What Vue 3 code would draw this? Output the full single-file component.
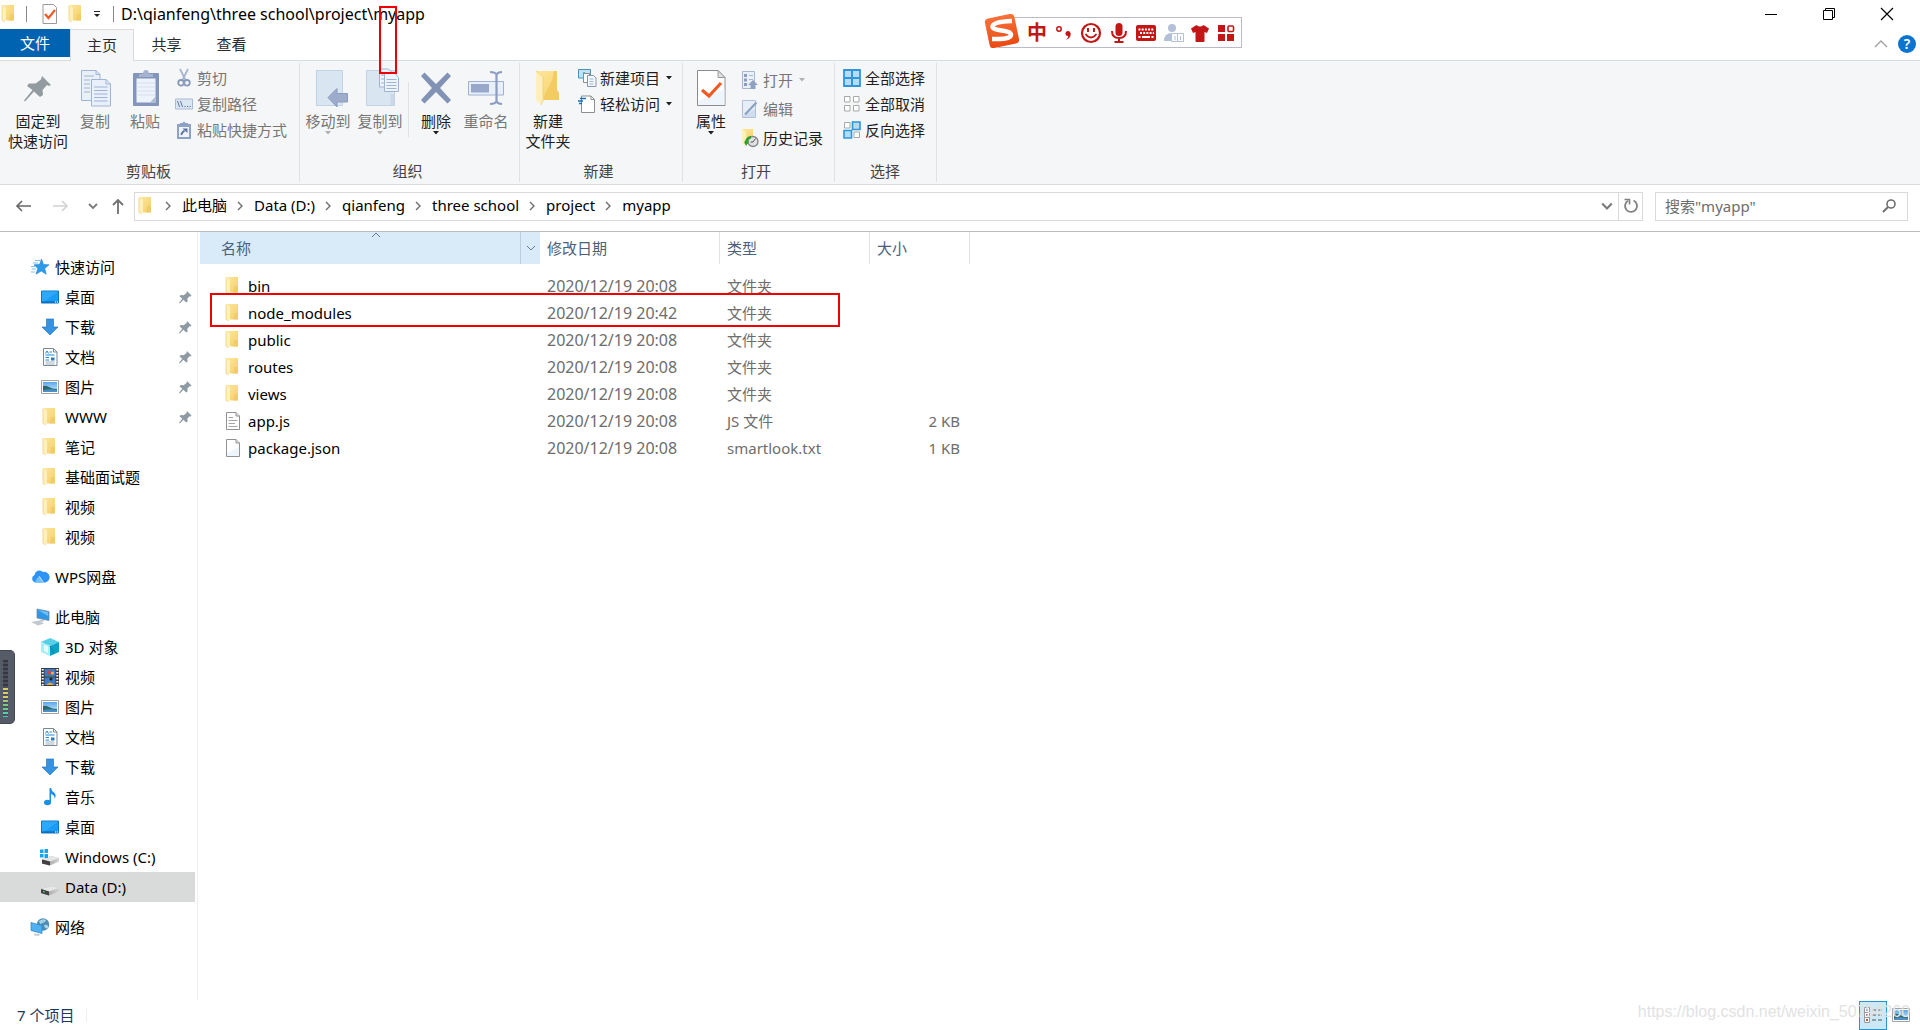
<script setup>
const clipboardSmall = [
  { icon: 'cut', label: '剪切' },
  { icon: 'path', label: '复制路径' },
  { icon: 'shortcut', label: '粘贴快捷方式' },
]
const selectSmall = [
  { icon: 'sel-all', label: '全部选择' },
  { icon: 'sel-none', label: '全部取消' },
  { icon: 'sel-invert', label: '反向选择' },
]
const crumbs = ['此电脑', 'Data (D:)', 'qianfeng', 'three school', 'project', 'myapp']
const tree = [
  {
    root: { icon: 'star', label: '快速访问' },
    items: [
      { icon: 'desktop', label: '桌面', pinned: true },
      { icon: 'download', label: '下载', pinned: true },
      { icon: 'document', label: '文档', pinned: true },
      { icon: 'picture', label: '图片', pinned: true },
      { icon: 'folder', label: 'WWW', pinned: true },
      { icon: 'folder', label: '笔记' },
      { icon: 'folder', label: '基础面试题' },
      { icon: 'folder', label: '视频' },
      { icon: 'folder', label: '视频' },
    ],
  },
  { root: { icon: 'cloud', label: 'WPS网盘' }, items: [] },
  {
    root: { icon: 'computer', label: '此电脑' },
    items: [
      { icon: 'cube', label: '3D 对象' },
      { icon: 'film', label: '视频' },
      { icon: 'picture', label: '图片' },
      { icon: 'document', label: '文档' },
      { icon: 'download', label: '下载' },
      { icon: 'music', label: '音乐' },
      { icon: 'desktop', label: '桌面' },
      { icon: 'drive-c', label: 'Windows (C:)' },
      { icon: 'drive', label: 'Data (D:)', selected: true },
    ],
  },
  { root: { icon: 'network', label: '网络' }, items: [] },
]
const files = [
  { icon: 'folder', name: 'bin', date: '2020/12/19 20:08', type: '文件夹', size: '' },
  { icon: 'folder', name: 'node_modules', date: '2020/12/19 20:42', type: '文件夹', size: '' },
  { icon: 'folder', name: 'public', date: '2020/12/19 20:08', type: '文件夹', size: '' },
  { icon: 'folder', name: 'routes', date: '2020/12/19 20:08', type: '文件夹', size: '' },
  { icon: 'folder', name: 'views', date: '2020/12/19 20:08', type: '文件夹', size: '' },
  { icon: 'file-text', name: 'app.js', date: '2020/12/19 20:08', type: 'JS 文件', size: '2 KB' },
  { icon: 'file', name: 'package.json', date: '2020/12/19 20:08', type: 'smartlook.txt', size: '1 KB' },
]
</script>

<template>
  <div class="explorer">
    <svg class="sprite" aria-hidden="true">
      <defs>
        <linearGradient id="g-fold" x1="0" y1="0" x2="1" y2="1">
          <stop offset="0" stop-color="#ffe79b" /><stop offset="1" stop-color="#f3cf68" />
        </linearGradient>
        <linearGradient id="g-sogou" x1="0" y1="0" x2="0" y2="1">
          <stop offset="0" stop-color="#f9703a" /><stop offset="1" stop-color="#ea4a12" />
        </linearGradient>
        <linearGradient id="g-sky" x1="0" y1="0" x2="0" y2="1">
          <stop offset="0" stop-color="#5aa5ea" /><stop offset="1" stop-color="#d6eefb" />
        </linearGradient>
        <linearGradient id="g-drive" x1="0" y1="0" x2="1" y2="0">
          <stop offset="0" stop-color="#8d8d8d" /><stop offset="1" stop-color="#d4d4d4" />
        </linearGradient>
      </defs>
      <symbol id="folder" viewBox="0 0 18 18">
        <path d="M2 0h12v15.500H6z" fill="url(#g-fold)" />
        <path d="M10.500 9h3.500v6.500h-5z" fill="#efc75e" opacity=".6" />
        <path d="M2 0l4 2.500v12.500L4.500 17 2 15z" fill="#fff0bd" />
        <path d="M2 .5v14.800l2.500 1.500" fill="none" stroke="#edca6c" stroke-width=".7" />
      </symbol>
      <symbol id="folder-big" viewBox="0 0 36 36">
        <path d="M6 1h21v19l2 3v7H12z" fill="url(#g-fold)" />
        <path d="M14 30c1-11 8-13 10-29h3v19l2 3v7z" fill="#f2cc63" />
        <path d="M6 1l7 6v24l-2 4-5-5z" fill="#ffefbd" />
        <path d="M6 1l7 6v24l-2 4" fill="none" stroke="#eccb70" stroke-width=".7" />
      </symbol>
      <symbol id="page-check" viewBox="0 0 18 20">
        <path d="M2 .5h10.500l3 3v16H2z" fill="#fff" stroke="#9a9a9a" />
        <path d="M4 10l3.500 4 6.500-8" fill="none" stroke="#f05a28" stroke-width="2.200" />
      </symbol>
      <symbol id="page-check-big" viewBox="0 0 36 36">
        <path d="M4.500.5H25l7 7v28h-27.500z" fill="#fff" stroke="#8c8c8c" />
        <path d="M5 31l26.500-12v16H5z" fill="#eff5fc" />
        <path d="M25 .5V7.500h7z" fill="#dfe1e3" stroke="#9b9b9b" />
        <path d="M9 20l7 6 12-13" fill="none" stroke="#f15a22" stroke-width="3.200" />
      </symbol>
      <symbol id="pin-big" viewBox="0 0 36 36">
        <path d="M22 6l9 9-2 1-2-1-4.500 5 .5 5-3 2-6-5.500L5 31.500l-1-1L12.500 20 7 16l2-2.500 6.500 0L21 9.500z" fill="#929b9f" />
      </symbol>
      <symbol id="pin" viewBox="0 0 14 14">
        <path d="M9 1l4.500 4.500-1 1-1-.3-2.200 2.600.4 2.400-1.500 1.300-2.800-2.700L1.800 13.500l-.8-.8 3.300-4L1.500 6.200l1.200-1.200 3 .2L8.500 3z" fill="#8d9aa3" />
      </symbol>
      <symbol id="copy-big" viewBox="0 0 36 36">
        <g stroke="#9fb3d3" fill="#e9f0fa">
          <path d="M4.500.5H19l4 4v26H4.500z" />
          <path d="M14.500 9.500H29l4.500 4.500v22H14.500z" />
          <path d="M29 9.500V14h4.500M19 .5v4h4" fill="none" />
          <path d="M7 6h10M7 10h6M7 14h6M7 18h6M7 22h6M17 17h13.500M17 20.500h13.500M17 24h13.500M17 27.500h13.500M17 31h13.500" />
        </g>
      </symbol>
      <symbol id="paste-big" viewBox="0 0 36 36">
        <rect x="6" y="3" width="26" height="33" rx="1" fill="#8495bb" />
        <path d="M9.500 8.500h19v24h-19z" fill="#edf3fb" />
        <path d="M9.500 13h19M9.500 17h19M9.500 21h19M9.500 25h19" stroke="#d5dfee" />
        <path d="M23 32.500l5.500-6v6z" fill="#aebcd6" />
        <path d="M12 7V4h4q0-4 3-4t3 4h4v3z" fill="#a5b3cf" />
      </symbol>
      <symbol id="move-big" viewBox="0 0 36 36">
        <path d="M6.500.5h26v35h-26z" fill="#dae5f2" stroke="#bfd2e6" />
        <path d="M18 27.500l9-9v5h10.500v8.500H27v5z" fill="#9dacca" stroke="#8b9cbd" />
      </symbol>
      <symbol id="copyto-big" viewBox="0 0 36 36">
        <path d="M4.500.5h28v35h-28z" fill="#dae5f2" stroke="#bfd2e6" />
        <g fill="#eef4fb" stroke="#9fb3d3">
          <path d="M17.500-1h9l3 3v15h-12z" /><path d="M22.500 3.500H33l3.500 4v14h-14z" />
          <path d="M24.500 9.500h10M24.500 12.500h10M24.500 15.500h10M24.500 18.500h10M19 5h3M19 9h3M19 13h3" />
        </g>
        <path d="M28.500 24h4v11.500h-4z" fill="#c9d7e7" />
      </symbol>
      <symbol id="delete-big" viewBox="0 0 36 36">
        <path d="M3 6l3.500-3.500L18 14 29.500 2.500 33 6 22 18l11 12-3.500 3.500L18 22 6.500 33.500 3 30 14 18z" fill="#8292b5" />
      </symbol>
      <symbol id="rename-big" viewBox="0 0 36 36">
        <path d="M.5 11.500h35v13.500H.5z" fill="#e7effa" stroke="#9fb0d0" />
        <path d="M3 14h18v8.500H3z" fill="#97a8ca" />
        <path d="M22 2q5 0 6.500 2.500Q30 2 34 2M28.500 4v28M22 34q5 0 6.500-2.500Q30 34 34 34" fill="none" stroke="#8b9cc0" stroke-width="2.200" />
      </symbol>
      <symbol id="cut" viewBox="0 0 18 18">
        <path d="M5 0l5.500 11M13 0L7.500 11" stroke="#a9b6cf" stroke-width="1.800" />
        <circle cx="6" cy="13.800" r="2.800" fill="none" stroke="#8999bb" stroke-width="1.800" />
        <circle cx="12" cy="13.800" r="2.800" fill="none" stroke="#8999bb" stroke-width="1.800" />
      </symbol>
      <symbol id="path" viewBox="0 0 18 18">
        <path d="M.5 4h17v10H.5z" fill="#dbe6f3" stroke="#a9bad6" />
        <path d="M2.500 6l2 6M5.500 6l2 6M9.500 11.500h1.200M12 11.500h1.200M14.500 11.500h1.200" stroke="#5f7399" />
      </symbol>
      <symbol id="shortcut" viewBox="0 0 18 18">
        <path d="M2 3h14v15H2z" fill="#8fa1c4" /><path d="M4 6h10v10H4z" fill="#eef4fb" />
        <path d="M5 4V2h2.500Q9-1 10.500 2H13v2z" fill="#8fa1c4" />
        <path d="M6.500 14q-.3-2 3-4.500" stroke="#5e7399" stroke-width="1.800" fill="none" /><path d="M7.500 7.500H12.500V12z" fill="#5e7399" />
      </symbol>
      <symbol id="new-item" viewBox="0 0 18 18">
        <path d="M.5.5h12V9h-12z" fill="#bfe3f6" stroke="#4b8fb3" /><path d="M5 3.500h2v3H5z" fill="#3b7f66" />
        <path d="M5.500 4.500h6v9h-6z" fill="#fff" stroke="#8b8b8b" /><path d="M9.500 6.500h6l2.500 2.500v8.500H9.500z" fill="#f4f8ff" stroke="#8a95aa" />
        <path d="M11.500 10h4M11.500 12.500h4M11.500 15h4" stroke="#a4b3cb" />
      </symbol>
      <symbol id="easy-access" viewBox="0 0 18 18">
        <path d="M3.500 1h9.500l3.500 3.500V17.500H3.500z" fill="#fff" stroke="#8b8f94" /><path d="M13 1v3.500h3.500" fill="none" stroke="#8b8f94" />
        <path d="M2 3.500h6M0 6h5M1 8.500h3" stroke="#1b6fb5" stroke-width="1.400" />
      </symbol>
      <symbol id="open" viewBox="0 0 18 18">
        <path d="M1.500.5h12v17h-12z" fill="#e9f0f9" stroke="#a6b5d0" />
        <path d="M3 3h3v3H3zM3 7.500h3v3H3zM3 12h3v3H3z" fill="#8a9bbd" /><path d="M8 4.500h4M8 8.500h4" stroke="#a6b5d0" />
        <path d="M12 9l5 5h-2.500v4h-5v-4H7z" fill="#90a0c0" />
      </symbol>
      <symbol id="edit" viewBox="0 0 18 18">
        <path d="M1.500.5h13v17h-13z" fill="#e6eef8" stroke="#b1c0d8" /><path d="M2 16L14 9v8H2z" fill="#cfdeef" />
        <path d="M4 14.500L15.500 2.500" stroke="#8ca0c3" stroke-width="2.200" />
      </symbol>
      <symbol id="history" viewBox="0 0 18 18">
        <path d="M1 0h11v15H5z" fill="url(#g-fold)" /><path d="M1 0l4 3v14l-4-3z" fill="#ffefb9" />
        <circle cx="12" cy="12.500" r="5" fill="#e2e2e2" stroke="#858585" stroke-width="1.300" /><path d="M12 13l2.500-3.500M12 13H9.500" stroke="#555" />
        <path d="M5 15q0-6 5-7" stroke="#26a12e" stroke-width="2.400" fill="none" /><path d="M3 12.500h5L5 17z" fill="#26a12e" />
      </symbol>
      <symbol id="sel-all" viewBox="0 0 18 18">
        <path d="M1 1h16v16H1z" fill="#b5dcf6" stroke="#3095dd" stroke-width="1.800" /><path d="M9 1v16M1 9h16" stroke="#3095dd" stroke-width="2" />
      </symbol>
      <symbol id="sel-none" viewBox="0 0 18 18">
        <path d="M1.500 1.500H7V7H1.500zM10.500 1.500H16V7h-5.500zM1.500 10.500H7V16H1.500zM10.500 10.500H16V16h-5.500z" fill="#fff" stroke="#a7a7a7" />
      </symbol>
      <symbol id="sel-invert" viewBox="0 0 18 18">
        <path d="M1.500 1.500H7V7H1.500zM11 11H16.500V16.500H11z" fill="#fff" stroke="#a7a7a7" />
        <path d="M9.500 1H17v7.500H9.500zM1 9.500h7.500V17H1z" fill="#b5dcf6" stroke="#3095dd" stroke-width="1.600" />
      </symbol>
      <symbol id="star" viewBox="0 0 18 18">
        <path d="M10.500 1l2 5.500 5.500.3-4.300 3.600 1.500 5.800-4.900-3.200-5.300 3.200 1.900-5.800L3 6.800l5.500-.3z" fill="#2b9bea" stroke="#1d7fce" stroke-width=".6" />
        <path d="M4 2.500h5M2 5h5M0 8.500h4M1 11h4M0 14h4" stroke="#7fc1ee" />
      </symbol>
      <symbol id="desktop" viewBox="0 0 18 18">
        <path d="M.5 3h17v12H.5z" fill="#1a9bf4" stroke="#1075c1" /><path d="M1 3.500h16L3 14H1z" fill="#2ea8fb" />
        <path d="M1 14h13" stroke="#0b5c9c" /><path d="M14 14h1M16 14h1" stroke="#fff" />
      </symbol>
      <symbol id="download" viewBox="0 0 18 18">
        <path d="M5.500 1h7v8h4.500L9 17 1 9h4.500z" fill="#3493e3" stroke="#2a76bb" stroke-width=".7" />
      </symbol>
      <symbol id="document" viewBox="0 0 18 18">
        <path d="M2.500.5h10l3.500 3.500v13.500H2.500z" fill="#fff" stroke="#7c8790" /><path d="M12.500.5V4H16" fill="none" stroke="#7c8790" />
        <path d="M4.500 5.500L6 3l1.500 2.500M8.500 4H11M4.500 7h9M4.500 9.500H8M4.500 12H8" stroke="#1d87d8" fill="none" />
        <path d="M10 9.500h3.500v3H10z" fill="#2f77b8" /><path d="M4.500 14h9M4.500 16h9" stroke="#9fb1bf" />
      </symbol>
      <symbol id="picture" viewBox="0 0 18 18">
        <path d="M.5 2.500h17v13H.5z" fill="#fff" stroke="#9ea3a7" /><path d="M2 4h14v10H2z" fill="url(#g-sky)" />
        <path d="M2 8q3-1 6 1t8 2v2H2z" fill="#2b6b6b" /><path d="M2 12.500q6-2 14-.5v2H2z" fill="#4d8ec4" />
      </symbol>
      <symbol id="cloud" viewBox="0 0 18 18">
        <path d="M4 14.500a4 4 0 0 1-.5-7.500A5 5 0 0 1 12 4a5 5 0 0 1 2.500 10.500z" fill="#2f93f5" />
        <path d="M4 14.500q2-6 5-6l3.500 6z" fill="#71c0fb" /><path d="M8 8l4.500 6.500" stroke="#cfeaff" stroke-width=".8" />
      </symbol>
      <symbol id="computer" viewBox="0 0 18 18">
        <path d="M6 1l12 2.500v9L6 10z" fill="#2f97e6" stroke="#6c8ba3" stroke-width=".8" /><path d="M7 2l10 2v4z" fill="#6cc0f7" />
        <path d="M10 11.500l4 1-3 1.500-3-1.500zM0 14l8-1.500 5 3L7 17.500z" fill="#c2cad1" />
      </symbol>
      <symbol id="cube" viewBox="0 0 18 18">
        <path d="M9 0l9 4-9 4-9-4z" fill="#57cfe6" /><path d="M0 4l9 4v10l-9-4z" fill="#a9edf5" /><path d="M18 4L9 8v10l9-4z" fill="#0ea0c8" />
        <path d="M3 7l4 1v7l-4-2z" fill="#e6fbfd" /><path d="M9 8l4 8" stroke="#0b86b0" />
      </symbol>
      <symbol id="film" viewBox="0 0 18 18">
        <path d="M0 0h18v18H0z" fill="#3a3a3a" /><path d="M3.500 1h11v7.500h-11zM3.500 9.500h11V17h-11z" fill="#3f79cc" />
        <path d="M1.700 1v17M16.300 1v17" stroke="#fff" stroke-width="2" stroke-dasharray="1.600 1.400" />
        <circle cx="8" cy="4.500" r="2" fill="#d8413b" /><circle cx="11.500" cy="5" r="1.600" fill="#e5b53a" /><path d="M5 7.500h8v1H5z" fill="#3d8f3a" />
        <circle cx="10" cy="11" r="1.500" fill="#222" /><path d="M5 17q4-5 8 0z" fill="#d9a93a" />
      </symbol>
      <symbol id="music" viewBox="0 0 18 18">
        <ellipse cx="6.500" cy="14.500" rx="3.500" ry="2.800" fill="#1790e8" /><path d="M8.500 0h1.500q.5 3 3 4.500 3 2.500.5 6.500.5-4-3.500-5v8.500H8.500z" fill="#1790e8" />
      </symbol>
      <symbol id="drive" viewBox="0 0 18 18">
        <path d="M0 11L10 8l8 2v3.500L8 17.500l-8-2.500z" fill="url(#g-drive)" /><path d="M0 11l8 2.500L18 10l-8-2z" fill="#e6e6e6" />
        <path d="M0 11l8 2.500v4L0 15z" fill="#414141" /><path d="M2 13.500l2 .6" stroke="#5ed26a" />
      </symbol>
      <symbol id="drive-c" viewBox="0 0 18 18">
        <path d="M1 11.500L10 8l8 2v3.500L9 17.500l-8-2z" fill="url(#g-drive)" /><path d="M1 11.500l8 2L18 10l-8-2z" fill="#e6e6e6" />
        <path d="M1 11.500l8 2v4l-8-2z" fill="#414141" />
        <path d="M-1 1.500h3.500V5H-1zM3.500 1H7v4H3.500zM-1 6h3.500v3.500H-1zM3.500 6H7v4H3.500z" fill="#14a4f4" />
      </symbol>
      <symbol id="network" viewBox="0 0 18 18">
        <circle cx="12" cy="6.500" r="6.200" fill="#4d8db5" /><path d="M8 3q4-3 7-1-1 3-4 3-2 3-3-2zM13 7q5-1 4 3-3 2-4-3z" fill="#a4d3e8" />
        <path d="M0 4.500l11 3v8L0 12.500z" fill="#4fb0f2" stroke="#2d82c4" stroke-width=".7" /><path d="M3 15.500l6 .5-1 2-5-.5z" fill="#c7d0d6" />
      </symbol>
      <symbol id="file" viewBox="0 0 18 18">
        <path d="M2.500.5H12l3.500 3.500v13.500h-13z" fill="#fff" stroke="#919191" /><path d="M3 14l12-6v9H3z" fill="#edf5fc" /><path d="M12 .5V4h3.500" fill="#e4e4e4" stroke="#919191" />
      </symbol>
      <symbol id="file-text" viewBox="0 0 18 18">
        <path d="M2.500.5H12l3.500 3.500v13.500h-13z" fill="#fff" stroke="#919191" /><path d="M12 .5V4h3.500" fill="#e4e4e4" stroke="#919191" />
        <path d="M4.500 5.500H9M4.500 8.500h9M4.500 11.500H11M4.500 14.500h9" stroke="#a5a5a5" />
      </symbol>
      <symbol id="chevron" viewBox="0 0 8 10"><path d="M2 1l4 4-4 4" fill="none" stroke="#6d6d6d" stroke-width="1.400" /></symbol>
      <symbol id="down" viewBox="0 0 10 8"><path d="M1 2l4 4 4-4" fill="none" stroke="#7a7a7a" stroke-width="1.800" /></symbol>
      <symbol id="caret" viewBox="0 0 6 4"><path d="M0 0h6L3 3.500z" fill="currentColor" /></symbol>
    </svg>

    <header class="titlebar">
      <svg class="ic18"><use href="#folder" /></svg>
      <span class="bar first"></span>
      <button class="plain" aria-label="属性"><svg class="ic20"><use href="#page-check" /></svg></button>
      <button class="plain new" aria-label="新建文件夹"><svg class="ic18"><use href="#folder" /></svg></button>
      <button class="plain custom" aria-label="自定义快速访问工具栏">
        <svg width="8" height="8" viewBox="0 0 8 8"><path d="M1 1.500h6" stroke="#222" /><path d="M1 4h6L4 7z" fill="#222" /></svg>
      </button>
      <span class="bar"></span>
      <h1 class="title">D:\qianfeng\three school\project\myapp</h1>
      <div class="controls">
        <button class="plain" aria-label="最小化"><svg width="12" height="12"><path d="M0 6.500h12" stroke="#000" /></svg></button>
        <button class="plain" aria-label="还原"><svg width="12" height="12"><path d="M.5 2.500h9v9h-9zM2.500 2.500v-2h9v9h-2" fill="none" stroke="#000" /></svg></button>
        <button class="plain" aria-label="关闭"><svg width="12" height="12"><path d="M0 0l12 12M12 0L0 12" stroke="#000" stroke-width="1.200" /></svg></button>
      </div>
    </header>

    <nav class="tabs">
      <button class="tab file">文件</button>
      <button class="tab active">主页</button>
      <button class="tab">共享</button>
      <button class="tab">查看</button>
      <div class="tab-tools">
        <button class="plain" aria-label="最小化功能区"><svg width="14" height="8"><path d="M1 7l6-6 6 6" fill="none" stroke="#a0a0a0" stroke-width="1.400" /></svg></button>
        <button class="help" aria-label="帮助">?</button>
      </div>
    </nav>

    <section class="ribbon">
      <div class="group g-clip">
        <div class="tools">
          <button class="big w68"><svg class="ic36"><use href="#pin-big" /></svg><span>固定到<br />快速访问</span></button>
          <button class="big w46 off"><svg class="ic36"><use href="#copy-big" /></svg><span>复制</span></button>
          <button class="big w54 off"><svg class="ic36"><use href="#paste-big" /></svg><span>粘贴</span></button>
          <div class="small-col">
            <button v-for="s in clipboardSmall" :key="s.label" class="small off"><svg class="ic18"><use :href="'#' + s.icon" /></svg>{{ s.label }}</button>
          </div>
        </div>
        <div class="group-name">剪贴板</div>
      </div>
      <div class="group g-org">
        <div class="tools">
          <button class="big w52 off"><svg class="ic36"><use href="#move-big" /></svg><span>移动到</span><svg class="caret"><use href="#caret" /></svg></button>
          <button class="big w52 off"><svg class="ic36"><use href="#copyto-big" /></svg><span>复制到</span><svg class="caret"><use href="#caret" /></svg></button>
          <span class="divider"></span>
          <button class="big w54"><svg class="ic36"><use href="#delete-big" /></svg><span>删除</span><svg class="caret"><use href="#caret" /></svg></button>
          <button class="big w46 off"><svg class="ic36"><use href="#rename-big" /></svg><span>重命名</span></button>
        </div>
        <div class="group-name">组织</div>
      </div>
      <div class="group g-new">
        <div class="tools">
          <button class="big w54"><svg class="ic36"><use href="#folder-big" /></svg><span>新建<br />文件夹</span></button>
          <div class="small-col">
            <button class="small"><svg class="ic18"><use href="#new-item" /></svg>新建项目<svg class="caret"><use href="#caret" /></svg></button>
            <button class="small"><svg class="ic18"><use href="#easy-access" /></svg>轻松访问<svg class="caret"><use href="#caret" /></svg></button>
          </div>
        </div>
        <div class="group-name">新建</div>
      </div>
      <div class="group g-open">
        <div class="tools">
          <button class="big w54"><svg class="ic36"><use href="#page-check-big" /></svg><span>属性</span><svg class="caret"><use href="#caret" /></svg></button>
          <div class="small-col roomy">
            <button class="small off"><svg class="ic18"><use href="#open" /></svg>打开<svg class="caret"><use href="#caret" /></svg></button>
            <button class="small off"><svg class="ic18"><use href="#edit" /></svg>编辑</button>
            <button class="small"><svg class="ic18"><use href="#history" /></svg>历史记录</button>
          </div>
        </div>
        <div class="group-name">打开</div>
      </div>
      <div class="group g-sel">
        <div class="tools">
          <div class="small-col">
            <button v-for="s in selectSmall" :key="s.label" class="small"><svg class="ic18"><use :href="'#' + s.icon" /></svg>{{ s.label }}</button>
          </div>
        </div>
        <div class="group-name">选择</div>
      </div>
    </section>

    <div class="address-row">
      <div class="nav-buttons">
        <button class="plain" aria-label="后退"><svg width="16" height="12"><path d="M7 1L2 6l5 5M2 6h14" fill="none" stroke="#666" stroke-width="1.600" /></svg></button>
        <button class="plain" aria-label="前进"><svg width="16" height="12"><path d="M9 1l5 5-5 5M14 6H0" fill="none" stroke="#d2d2d2" stroke-width="1.600" /></svg></button>
        <button class="plain recent" aria-label="最近浏览的位置"><svg width="10" height="8"><use href="#down" /></svg></button>
        <button class="plain" aria-label="上移"><svg width="12" height="16"><path d="M1 7l5-5 5 5M6 2v14" fill="none" stroke="#707070" stroke-width="1.800" /></svg></button>
      </div>
      <div class="address">
        <svg class="ic18"><use href="#folder" /></svg>
        <template v-for="c in crumbs" :key="c">
          <svg class="chev"><use href="#chevron" /></svg>
          <button class="plain crumb">{{ c }}</button>
        </template>
        <button class="plain drop" aria-label="以前的位置"><svg width="12" height="10"><use href="#down" /></svg></button>
        <button class="plain refresh" aria-label="刷新">
          <svg width="16" height="16"><path d="M10.500 2.500a6 6 0 1 1-5.500.3" fill="none" stroke="#808080" stroke-width="1.800" /><path d="M1.500 1.500h5v5" fill="none" stroke="#808080" stroke-width="1.600" /></svg>
        </button>
      </div>
      <div class="search">
        <input type="text" placeholder='搜索"myapp"' aria-label="搜索 myapp" />
        <svg width="14" height="14"><circle cx="9" cy="5" r="4" fill="none" stroke="#707070" stroke-width="1.600" /><path d="M6 8l-5 5" stroke="#707070" stroke-width="2" /></svg>
      </div>
    </div>

    <main class="content">
      <aside class="sidebar">
        <div v-for="g in tree" :key="g.root.label" class="branch">
          <a href="#" class="node root"><svg class="ic18"><use :href="'#' + g.root.icon" /></svg>{{ g.root.label }}</a>
          <a v-for="(n, i) in g.items" :key="i" href="#" class="node" :class="{ selected: n.selected }">
            <svg class="ic18"><use :href="'#' + n.icon" /></svg>{{ n.label }}
            <svg v-if="n.pinned" class="pin"><use href="#pin" /></svg>
          </a>
        </div>
      </aside>
      <div class="list">
        <table>
          <thead>
            <tr>
              <th class="c-name" scope="col">
                <div class="name-head">
                  名称
                  <svg class="sort" width="10" height="6"><path d="M1 5l4-4 4 4" fill="none" stroke="#6a7b8c" /></svg>
                  <button class="plain filter" aria-label="筛选名称"><svg width="10" height="6"><path d="M1 1l4 4 4-4" fill="none" stroke="#6a7b8c" /></svg></button>
                </div>
              </th>
              <th class="c-date" scope="col">修改日期</th>
              <th class="c-type" scope="col">类型</th>
              <th class="c-size" scope="col">大小</th>
            </tr>
          </thead>
          <tbody>
            <tr v-for="f in files" :key="f.name">
              <td class="name"><div><svg class="ic18"><use :href="'#' + f.icon" /></svg>{{ f.name }}</div></td>
              <td class="date">{{ f.date }}</td>
              <td>{{ f.type }}</td>
              <td class="size">{{ f.size }}</td>
            </tr>
          </tbody>
        </table>
        <div class="mark row-mark"></div>
      </div>
    </main>

    <footer class="status">
      <span class="count">7 个项目</span>
      <div class="views">
        <button class="view on" aria-label="详细信息">
          <svg width="18" height="18"><path d="M.5 1.500h5v5h-5zM.5 6.500h5v5h-5zM.5 11.500h5v5h-5z" fill="#fff" stroke="#999" /><path d="M2 4h2" stroke="#444" stroke-width="2" /><path d="M2 9h2M2 14h2" stroke="#b65a35" stroke-width="2" /><path d="M8 4h4M14 4h4M8 9h4M14 9h4M8 14h4M14 14h4" stroke="#555" /></svg>
        </button>
        <button class="view" aria-label="大缩略图"><svg class="ic18"><use href="#picture" /></svg></button>
      </div>
    </footer>

    <div class="watermark">https://blog.csdn.net/weixin_50794260</div>
    <div class="mark title-mark"></div>

    <div class="ime">
      <svg class="sogou" viewBox="0 0 36 36">
        <rect x="3" y="3" width="30" height="30" rx="4" fill="url(#g-sogou)" transform="rotate(-12 18 18)" />
        <path d="M28 8Q9 8.500 8.500 13.500c0 5 18 3 18.500 8 0 5-12 4.500-19 4.500" fill="none" stroke="#fff" stroke-width="4.600" />
      </svg>
      <button class="plain ime-lang">中</button>
      <button class="plain" aria-label="标点"><svg width="18" height="18"><circle cx="4" cy="5" r="2.200" fill="none" stroke="#c31616" stroke-width="1.500" /><circle cx="13" cy="9.500" r="2.500" fill="#c31616" /><path d="M15.500 9.500q.5 4.500-4.500 6.500 3-3 2-5z" fill="#c31616" /></svg></button>
      <button class="plain" aria-label="表情"><svg width="22" height="22"><circle cx="11" cy="11" r="9" fill="none" stroke="#c31616" stroke-width="2.200" /><path d="M8 6v4M14 6v4" stroke="#c31616" stroke-width="2" /><path d="M5.500 12q5.500 7 11 0" fill="none" stroke="#c31616" stroke-width="1.800" /></svg></button>
      <button class="plain" aria-label="语音"><svg width="18" height="22"><rect x="5.500" y="1" width="7" height="13" rx="3.500" fill="#c31616" /><path d="M2 9q0 7 7 7t7-7M9 16v4M4.500 20h9" fill="none" stroke="#c31616" stroke-width="2" /></svg></button>
      <button class="plain" aria-label="软键盘"><svg width="20" height="16"><rect width="20" height="16" rx="2" fill="#c31616" /><path d="M2.500 4.500h15M4 8h14" stroke="#fff" stroke-width="2" stroke-dasharray="2 1.200" /><path d="M2.500 12h2M6 12h8M15.500 12h2" stroke="#fff" stroke-width="2" /></svg></button>
      <button class="plain" aria-label="账户"><svg width="20" height="20"><circle cx="8" cy="5" r="4" fill="#b2c0d8" /><path d="M0 18q0-8 8-8 4 0 6 3v5z" fill="#b2c0d8" /><path d="M7.500 10.500h12v8h-12z" fill="#fff" stroke="#b2c0d8" /><path d="M13.500 10v9M11 13v4M16.500 13v4" stroke="#b2c0d8" /></svg></button>
      <button class="plain" aria-label="皮肤"><svg width="18" height="18"><path d="M5.500 1q3.500 3 7 0L18 4.500 16 9l-2.500-1v9q0 1-1 1h-7q-1 0-1-1V8L2 9 0 4.500z" fill="#c31616" /></svg></button>
      <button class="plain" aria-label="工具箱"><svg width="18" height="18"><path d="M1 1h7v7H1zM1 10h7v7H1zM10 10h7v7h-7z" fill="#c31616" /><rect x="11" y="2" width="5.500" height="5.500" rx="1" fill="none" stroke="#c31616" stroke-width="1.600" /></svg></button>
    </div>

    <div class="gadget"><div class="meter"></div></div>
  </div>
</template>

<style>
body {
  margin: 0;
}
</style>

<style scoped>
.explorer {
  position: relative;
  display: flex;
  flex-direction: column;
  min-height: 100vh;
  background: #fff;
  color: #000;
  font: 15px/20px "Noto Sans", "Noto Sans CJK SC", sans-serif;
  overflow: hidden;
}
.explorer * {
  box-sizing: border-box;
}
.sprite {
  position: absolute;
  width: 0;
  height: 0;
}
svg {
  display: block;
  flex: none;
  overflow: visible;
}
symbol {
  overflow: visible;
}
button {
  font: inherit;
  color: inherit;
  border: 0;
  background: none;
  padding: 0;
  margin: 0;
  white-space: nowrap;
}
.plain {
  display: flex;
  align-items: center;
  justify-content: center;
}
.ic18 { width: 18px; height: 18px; }
.ic20 { width: 18px; height: 20px; }
.ic36 { width: 36px; height: 36px; }

.titlebar {
  display: flex;
  align-items: center;
  height: 29px;
  padding: 0 4px 1px 0;
}
.bar {
  width: 1px;
  height: 16px;
  background: #8a8a8a;
}
.bar.first { margin: 0 14px 0 8px; }
.new { margin-left: 8px; }
.custom { margin: 0 12px 0 8px; }
.title {
  margin: 0 0 0 7px;
  font-size: 16px;
  font-weight: 400;
}
.controls {
  display: flex;
  margin-left: auto;
}
.controls .plain { width: 58px; }

.tabs {
  display: flex;
  height: 31px;
}
.tab {
  width: 65px;
  height: 31px;
  padding-bottom: 2px;
  color: #2b2b2b;
}
.tab.file {
  width: 70px;
  height: 28px;
  padding-bottom: 0;
  color: #fff;
  background: #0063b1;
}
.tab.active {
  width: 64px;
  height: 32px;
  border: 1px solid #dadbdc;
  border-bottom: 0;
  background: #f5f6f7;
  z-index: 1;
}
.tab-tools {
  display: flex;
  align-items: center;
  gap: 10px;
  margin-left: auto;
  padding: 0 4px 2px 0;
}
.help {
  width: 18px;
  height: 18px;
  border-radius: 9px;
  background: #0b74cf;
  color: #fff;
  font-size: 14px;
  line-height: 18px;
  font-weight: 600;
}

.ribbon {
  display: flex;
  height: 125px;
  padding: 2px 0;
  border-top: 1px solid #dadbdc;
  border-bottom: 1px solid #dadbdc;
  background: #f5f6f7;
}
.group {
  display: flex;
  flex-direction: column;
  padding-bottom: 1px;
  border-right: 1px solid #dfe1e3;
  color: #1f1f1f;
}
.tools {
  display: flex;
  flex: 1;
  align-items: flex-start;
}
.group-name {
  padding-right: 6px;
  text-align: center;
  color: #444;
}
.g-clip { width: 300px; padding-left: 4px; }
.g-org { width: 220px; padding-left: 2px; }
.g-new { width: 163px; padding-left: 1px; }
.g-open { width: 152px; padding-left: 1px; }
.g-sel { width: 102px; padding-left: 5px; }
.big {
  display: flex;
  flex-direction: column;
  align-items: center;
  padding-top: 7px;
}
.big span { margin-top: 5px; }
.w68 { width: 68px; }
.w54 { width: 54px; }
.w52 { width: 52px; }
.w46 { width: 46px; }
.off { color: #767676; }
.caret { width: 6px; height: 4px; }
.off .caret { color: #b0b0b0; }
.small .caret { margin-left: 2px; }
.divider {
  width: 1px;
  height: 55px;
  margin: 19px 0 0 2px;
  background: #dfe1e3;
}
.small-col {
  display: flex;
  flex-direction: column;
  padding: 2px 0 0 3px;
}
.small {
  display: flex;
  align-items: center;
  gap: 4px;
  height: 26px;
}
.roomy .small { height: 29px; }

.address-row {
  display: flex;
  align-items: center;
  height: 47px;
  padding: 0 12px 4px 0;
  border-bottom: 1px solid #bcbcbc;
}
.nav-buttons {
  display: flex;
  align-items: center;
  gap: 22px;
  width: 134px;
  padding-left: 15px;
}
.nav-buttons .recent { margin: 0 -8px 0 -3px; }
.address {
  display: flex;
  flex: 1;
  align-items: center;
  height: 29px;
  padding-left: 2px;
  border: 1px solid #d9d9d9;
}
.crumb { padding-bottom: 2px; }
.chev {
  width: 8px;
  height: 10px;
  margin: 0 10px 0 9px;
}
.drop {
  width: 22px;
  margin-left: auto;
}
.refresh {
  width: 24px;
  height: 27px;
  border-left: 1px solid #d9d9d9;
}
.search {
  display: flex;
  align-items: center;
  width: 253px;
  height: 29px;
  margin-left: 12px;
  padding: 0 11px 0 9px;
  border: 1px solid #d9d9d9;
}
.search input {
  flex: 1;
  min-width: 0;
  padding: 0;
  border: 0;
  outline: 0;
  background: none;
  font: inherit;
}
.search input::placeholder {
  color: #6d6d6d;
  opacity: 1;
}

.content {
  display: flex;
  flex: 1;
}
.sidebar {
  width: 198px;
  padding: 20px 2px 0 0;
  border-right: 1px solid #f0f0f0;
}
.branch { margin-bottom: 10px; }
.node {
  display: flex;
  align-items: center;
  gap: 6px;
  height: 30px;
  padding: 0 3px 0 41px;
  color: #000;
  text-decoration: none;
}
.node.root { padding-left: 31px; }
.node.selected { background: #d9dada; }
.pin {
  width: 14px;
  height: 14px;
  margin-left: auto;
}
.list {
  position: relative;
  flex: 1;
  padding-left: 2px;
}
table {
  width: 770px;
  table-layout: fixed;
  border-collapse: separate;
  border-spacing: 0;
}
th {
  height: 32px;
  padding: 0 0 0 7px;
  border-right: 1px solid #e2e2e2;
  font-weight: 400;
  text-align: left;
  color: #4c607a;
}
th.c-name {
  width: 340px;
  padding: 0;
  border: 0;
  background: #d9ebf9;
}
.c-date { width: 180px; }
.c-type { width: 150px; }
.c-size { width: 100px; }
.name-head {
  position: relative;
  display: flex;
  align-items: center;
  height: 32px;
  padding-left: 21px;
}
.sort {
  position: absolute;
  top: 0;
  left: 171px;
}
.filter {
  width: 20px;
  height: 32px;
  margin-left: auto;
  border-left: 1px solid #b9cfe0;
}
tbody::before {
  content: "";
  display: block;
  height: 8px;
}
td {
  height: 27px;
  padding: 0 0 0 7px;
  color: #6d6d6d;
}
td.name {
  padding-left: 24px;
  color: #000;
}
td.name div {
  display: flex;
  align-items: center;
  gap: 6px;
}
td.date { font-size: 16px; }
td.size {
  padding-right: 10px;
  text-align: right;
}

.status {
  display: flex;
  align-items: center;
  height: 30px;
  padding: 0 5px 0 17px;
  color: #1e395b;
}
.count {
  padding-right: 12px;
  border-right: 1px solid #eee;
  line-height: 14px;
}
.views {
  display: flex;
  margin-left: auto;
}
.view {
  display: flex;
  align-items: center;
  justify-content: center;
  width: 28px;
  height: 29px;
}
.view.on {
  border: 1px solid #2a93d5;
  background: #cce8f6;
}

.mark {
  position: absolute;
  border: 2px solid #f00000;
  pointer-events: none;
}
.title-mark {
  left: 379px;
  top: 6px;
  width: 18px;
  height: 68px;
  z-index: 2;
}
.row-mark {
  left: 12px;
  top: 61px;
  width: 630px;
  height: 34px;
}
.watermark {
  position: absolute;
  right: 10px;
  bottom: 8px;
  font: 16px/20px "Liberation Sans", sans-serif;
  color: #e2e2e2;
  pointer-events: none;
}
.ime {
  position: absolute;
  left: 998px;
  top: 17px;
  display: flex;
  align-items: center;
  justify-content: space-between;
  width: 244px;
  height: 31px;
  padding: 0 6px 0 28px;
  border: 1px solid #b9bac6;
  background: #fff;
  z-index: 2;
}
.sogou {
  position: absolute;
  left: -15px;
  top: -5px;
  width: 36px;
  height: 36px;
}
.ime-lang {
  font-size: 20px;
  font-weight: 700;
  color: #c31616;
}
.gadget {
  position: absolute;
  left: 0;
  top: 650px;
  width: 15px;
  height: 74px;
  padding: 9px 0 0 3px;
  border: 1px solid #44474f;
  border-left: 0;
  border-radius: 0 5px 5px 0;
  background: #565b68;
}
.meter {
  width: 5px;
  height: 57px;
  background:
    repeating-linear-gradient(transparent 0 2px, #4a4f5a 2px 4px),
    linear-gradient(#34373f 0 27px, #d8cf55 27px 38px, #8cc96b 42px, #3fd0c0 57px);
}
</style>
